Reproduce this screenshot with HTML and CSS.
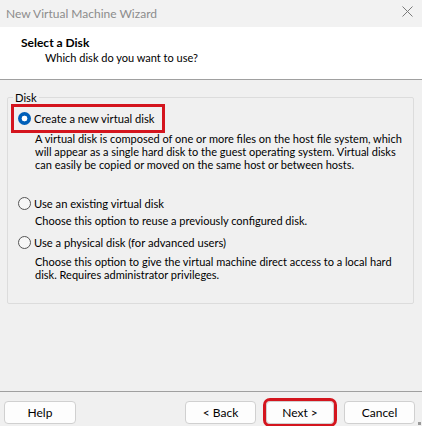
FILE: index.html
```html
<!DOCTYPE html>
<html lang="en">
<head>
    <meta charset="UTF-8">
    <title>New Virtual Machine Wizard</title>
    <link rel="stylesheet" href="styles.css">
</head>
<body>
    <div class="window">
        <div class="titlebar">
            <span class="title">New Virtual Machine Wizard</span>
            <svg class="close" width="11" height="11" viewBox="0 0 11 11">
                <path d="M0.5 0.5 L10.5 10.5 M10.5 0.5 L0.5 10.5" stroke="#7a7a7a" stroke-width="1" fill="none"/>
            </svg>
        </div>

        <div class="header">
            <div class="heading">Select a Disk</div>
            <div class="subheading">Which disk do you want to use?</div>
        </div>

        <div class="content">
            <fieldset class="group">
                <legend>Disk</legend>

                <div class="option first">
                    <label class="choice highlight"><span class="radio checked"></span>Create a new virtual disk</label>
                    <p class="desc">A virtual disk is composed of one or more files on the host file system, which<br>will appear as a single hard disk to the guest operating system. Virtual disks<br>can easily be copied or moved on the same host or between hosts.</p>
                </div>

                <div class="option second">
                    <label class="choice"><span class="radio"></span>Use an existing virtual disk</label>
                    <p class="desc">Choose this option to reuse a previously configured disk.</p>
                </div>

                <div class="option third">
                    <label class="choice"><span class="radio"></span>Use a physical disk (for advanced users)</label>
                    <p class="desc">Choose this option to give the virtual machine direct access to a local hard<br>disk. Requires administrator privileges.</p>
                </div>
            </fieldset>
        </div>

        <div class="footer">
            <button class="btn">Help</button>
            <div class="spacer"></div>
            <button class="btn">&lt; Back</button>
            <button class="btn next">Next &gt;</button>
            <button class="btn">Cancel</button>
        </div>
        <span class="grip"></span>
    </div>
</body>
</html>
```

FILE: styles.css
```css
body {
    margin: 0;
    background: #f0f0f0;
    font-family: Lato, "Noto Sans", sans-serif;
    font-size: 11px;
    color: #000;
}
.window {
    position: relative;
    width: 422px;
    height: 426px;
    display: flex;
    flex-direction: column;
    overflow: hidden;
}
.titlebar {
    height: 27px;
    display: flex;
    align-items: center;
    justify-content: space-between;
    padding: 0 9px 0 6px;
    background: #f2f2f2;
    flex-shrink: 0;
}
.title {
    color: #8c8c8c;
    font-size: 12px;
    margin-top: -1px;
}
.close {
    margin-top: -4px;
}
.header {
    height: 53px;
    background: #fff;
    border-bottom: 1px solid #a0a0a0;
    padding-top: 8px;
    box-sizing: border-box;
    flex-shrink: 0;
    line-height: 15px;
}
.heading {
    font-weight: bold;
    font-size: 12px;
    padding-left: 21px;
}
.subheading {
    padding-left: 45px;
}
.content {
    flex: 1;
    padding: 10px 8px 0 7px;
}
.group {
    margin: 0;
    min-width: 0;
    padding: 0 0 0 10px;
    height: 214px;
    box-sizing: border-box;
    border: 1px solid #dcdcdc;
    border-radius: 2px;
}
.group legend {
    margin-left: -5px;
    padding: 0 2px;
    line-height: 15px;
    font-size: 11.2px;
}
.option {
    display: flex;
    flex-direction: column;
}
.option.first { margin-top: 6px; }
.option.second { margin-top: 25px; }
.option.third { margin-top: 8px; }
.choice {
    display: flex;
    align-items: center;
    gap: 3px;
    height: 15px;
    font-size: 11.2px;
    white-space: nowrap;
    align-self: flex-start;
}
.highlight {
    outline: 3px solid #d4151e;
    outline-offset: 4px;
    padding-right: 4px;
}
.radio {
    width: 13px;
    height: 13px;
    box-sizing: border-box;
    border-radius: 50%;
    border: 1px solid #555;
    background: #f7f7f7;
    flex-shrink: 0;
}
.radio.checked {
    border: none;
    background: radial-gradient(circle, #fff 0 2.6px, #005fb8 3.2px);
}
.desc {
    margin: 6px 0 0 17px;
    line-height: 13px;
    white-space: nowrap;
}
.option.second .desc {
    margin-top: 3px;
}
.option.third .desc {
    margin-top: 5px;
}
.footer {
    height: 35px;
    border-top: 1px solid #a0a0a0;
    box-sizing: border-box;
    display: flex;
    align-items: flex-start;
    padding: 9px 7px 0 4px;
    flex-shrink: 0;
}
.spacer {
    flex: 1;
}
.btn {
    width: 71px;
    height: 23px;
    margin-left: 10px;
    background: #fdfdfd;
    border: 1px solid #d0d0d0;
    border-radius: 4px;
    font-family: inherit;
    font-size: 12px;
    color: #000;
    padding: 0;
}
.btn:first-child {
    margin-left: 0;
    width: 72px;
}
.btn.next {
    width: 68px;
    outline: 3px solid #d4151e;
    outline-offset: 0;
}
.grip {
    position: absolute;
    right: 1px;
    bottom: 1px;
    width: 3px;
    height: 3px;
    background: #9a9a9a;
}
```
